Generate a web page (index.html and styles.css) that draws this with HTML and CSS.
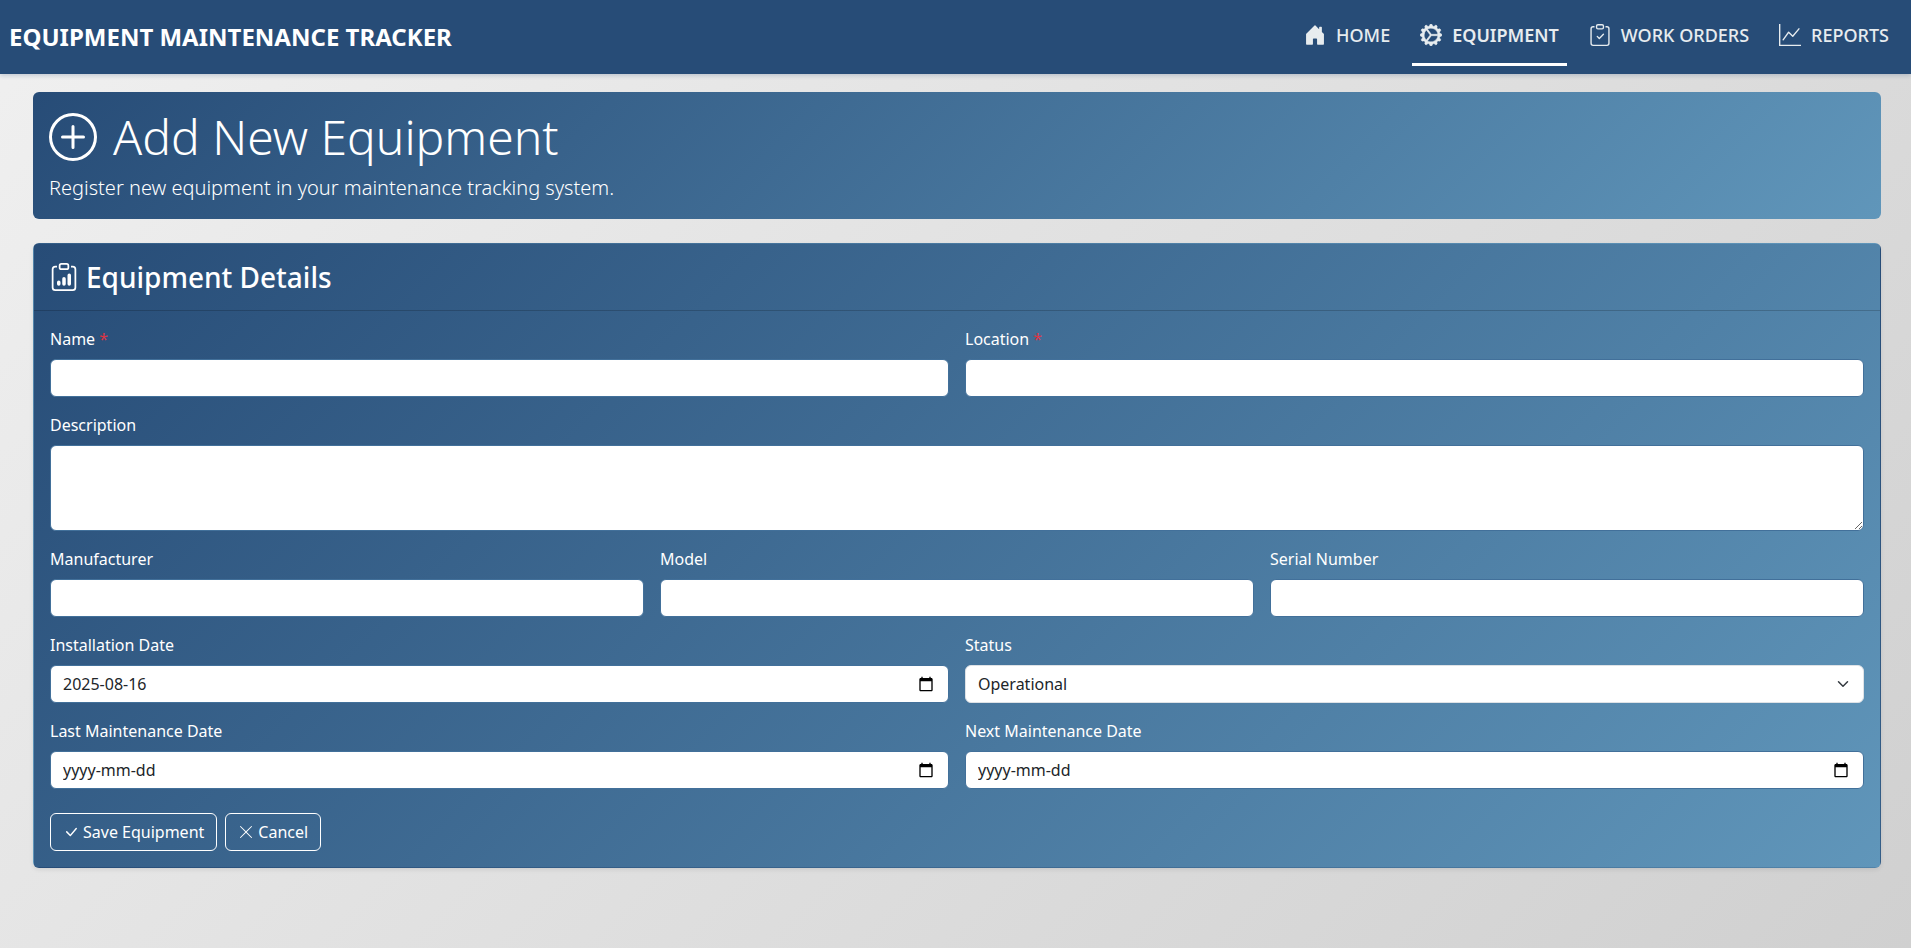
FILE: index.html
```html
<!DOCTYPE html>
<html lang="en-CA">
<head>
<meta charset="utf-8">
<meta name="viewport" content="width=device-width, initial-scale=1">
<title>Add New Equipment</title>
<link rel="stylesheet" href="styles.css">
</head>
<body>
<header class="navbar">
  <a class="brand" href="#">EQUIPMENT MAINTENANCE TRACKER</a>
  <nav class="nav" aria-label="Main">
    <a class="nav-link" href="#"><svg class="icon" viewBox="0 0 16 16" aria-hidden="true"><path d="M6.5 14.5v-3.505c0-.245.25-.495.5-.495h2c.25 0 .5.25.5.5v3.5a.5.5 0 0 0 .5.5h4a.5.5 0 0 0 .5-.5v-7a.5.5 0 0 0-.146-.354L13 5.793V2.5a.5.5 0 0 0-.5-.5h-1a.5.5 0 0 0-.5.5v1.293L8.354 1.146a.5.5 0 0 0-.708 0l-6 6A.5.5 0 0 0 1.5 7.5v7a.5.5 0 0 0 .5.5h4a.5.5 0 0 0 .5-.5"/></svg>HOME</a>
    <a class="nav-link active" href="#" aria-current="page"><svg class="icon" viewBox="0 0 16 16" aria-hidden="true"><path d="M7.068.727c.243-.97 1.62-.97 1.864 0l.071.286a.96.96 0 0 0 1.622.434l.205-.211c.695-.719 1.888-.03 1.613.931l-.08.284a.96.96 0 0 0 1.187 1.187l.283-.081c.96-.275 1.65.918.931 1.613l-.211.205a.96.96 0 0 0 .434 1.622l.286.071c.97.243.97 1.62 0 1.864l-.286.071a.96.96 0 0 0-.434 1.622l.211.205c.719.695.03 1.888-.931 1.613l-.284-.08a.96.96 0 0 0-1.187 1.187l.081.283c.275.96-.918 1.65-1.613.931l-.205-.211a.96.96 0 0 0-1.622.434l-.071.286c-.243.97-1.62.97-1.864 0l-.071-.286a.96.96 0 0 0-1.622-.434l-.205.211c-.695.719-1.888.03-1.613-.931l.08-.284a.96.96 0 0 0-1.186-1.187l-.284.081c-.96.275-1.65-.918-.931-1.613l.211-.205a.96.96 0 0 0-.434-1.622l-.286-.071c-.97-.243-.97-1.62 0-1.864l.286-.071a.96.96 0 0 0 .434-1.622l-.211-.205c-.719-.695-.03-1.888.931-1.613l.284.08a.96.96 0 0 0 1.187-1.186l-.081-.284c-.275-.96.918-1.65 1.613-.931l.205.211a.96.96 0 0 0 1.622-.434zM12.973 8.5H8.25l-2.834 3.779A4.998 4.998 0 0 0 12.973 8.5m0-1a4.998 4.998 0 0 0-7.557-3.779l2.834 3.78zM5.048 3.967l-.087.065zm-.431.355A4.98 4.98 0 0 0 3.002 8c0 1.455.622 2.765 1.615 3.678L7.375 8zm.344 7.646.087.065z"/></svg>EQUIPMENT</a>
    <a class="nav-link" href="#"><svg class="icon" viewBox="0 0 16 16" aria-hidden="true"><path d="M10.854 7.146a.5.5 0 0 1 0 .708l-3 3a.5.5 0 0 1-.708 0l-1.5-1.5a.5.5 0 1 1 .708-.708L7.5 9.793l2.646-2.647a.5.5 0 0 1 .708 0"/><path d="M4 1.5H3a2 2 0 0 0-2 2V14a2 2 0 0 0 2 2h10a2 2 0 0 0 2-2V3.5a2 2 0 0 0-2-2h-1v1h1a1 1 0 0 1 1 1V14a1 1 0 0 1-1 1H3a1 1 0 0 1-1-1V3.5a1 1 0 0 1 1-1h1z"/><path d="M9.5 1a.5.5 0 0 1 .5.5v1a.5.5 0 0 1-.5.5h-3a.5.5 0 0 1-.5-.5v-1a.5.5 0 0 1 .5-.5zm-3-1A1.5 1.5 0 0 0 5 1.5v1A1.5 1.5 0 0 0 6.5 4h3A1.5 1.5 0 0 0 11 2.5v-1A1.5 1.5 0 0 0 9.5 0z"/></svg>WORK ORDERS</a>
    <a class="nav-link" href="#"><svg class="icon" viewBox="0 0 16 16" aria-hidden="true"><path d="M0 0h1v15h15v1H0zm14.817 3.113a.5.5 0 0 1 .07.704l-4.5 5.5a.5.5 0 0 1-.74.037L7.06 6.767l-3.656 5.027a.5.5 0 0 1-.808-.588l4-5.5a.5.5 0 0 1 .758-.06l2.609 2.61 4.15-5.073a.5.5 0 0 1 .704-.07"/></svg>REPORTS</a>
  </nav>
</header>

<main class="content">
  <section class="page-header">
    <h1 class="page-title"><svg class="icon" viewBox="0 0 16 16" aria-hidden="true"><path d="M8 15A7 7 0 1 1 8 1a7 7 0 0 1 0 14m0 1A8 8 0 1 0 8 0a8 8 0 0 0 0 16"/><path d="M8 4a.5.5 0 0 1 .5.5v3h3a.5.5 0 0 1 0 1h-3v3a.5.5 0 0 1-1 0v-3h-3a.5.5 0 0 1 0-1h3v-3A.5.5 0 0 1 8 4"/></svg>Add New Equipment</h1>
    <p class="lead">Register new equipment in your maintenance tracking system.</p>
  </section>

  <section class="card">
    <div class="card-header">
      <h2 class="card-title"><svg class="icon" viewBox="0 0 16 16" aria-hidden="true"><path d="M4 11a1 1 0 1 1 2 0v1a1 1 0 1 1-2 0zm6-4a1 1 0 1 1 2 0v5a1 1 0 1 1-2 0zM7 9a1 1 0 0 1 2 0v3a1 1 0 1 1-2 0z"/><path d="M4 1.5H3a2 2 0 0 0-2 2V14a2 2 0 0 0 2 2h10a2 2 0 0 0 2-2V3.5a2 2 0 0 0-2-2h-1v1h1a1 1 0 0 1 1 1V14a1 1 0 0 1-1 1H3a1 1 0 0 1-1-1V3.5a1 1 0 0 1 1-1h1z"/><path d="M9.5 1a.5.5 0 0 1 .5.5v1a.5.5 0 0 1-.5.5h-3a.5.5 0 0 1-.5-.5v-1a.5.5 0 0 1 .5-.5zm-3-1A1.5 1.5 0 0 0 5 1.5v1A1.5 1.5 0 0 0 6.5 4h3A1.5 1.5 0 0 0 11 2.5v-1A1.5 1.5 0 0 0 9.5 0z"/></svg>Equipment Details</h2>
    </div>
    <form class="card-body">
      <div class="form-grid">
        <div class="field half">
          <label for="name">Name <span class="required">*</span></label>
          <input class="control" id="name" type="text">
        </div>
        <div class="field half">
          <label for="location">Location <span class="required">*</span></label>
          <input class="control" id="location" type="text">
        </div>
        <div class="field full">
          <label for="description">Description</label>
          <textarea class="control" id="description" rows="3"></textarea>
        </div>
        <div class="field third">
          <label for="manufacturer">Manufacturer</label>
          <input class="control" id="manufacturer" type="text">
        </div>
        <div class="field third">
          <label for="model">Model</label>
          <input class="control" id="model" type="text">
        </div>
        <div class="field third">
          <label for="serial">Serial Number</label>
          <input class="control" id="serial" type="text">
        </div>
        <div class="field half">
          <label for="installed">Installation Date</label>
          <div class="control-wrap">
            <input class="control" id="installed" type="text" inputmode="numeric" placeholder="yyyy-mm-dd" value="2025-08-16">
            <button class="picker" type="button" aria-label="Choose installation date"><svg class="icon" viewBox="0 0 24 24" aria-hidden="true"><path d="M20 3h-1V1h-2v2H7V1H5v2H4c-1.100 0-2 .9-2 2v16c0 1.100.9 2 2 2h16c1.100 0 2-.9 2-2V5c0-1.100-.9-2-2-2zm0 18H4V8h16v13z"/></svg></button>
          </div>
        </div>
        <div class="field half">
          <label for="status">Status</label>
          <div class="control-wrap">
            <select class="control select" id="status"><option>Operational</option></select>
            <svg class="chevron" viewBox="0 0 16 16" aria-hidden="true"><path d="m2 5 6 6 6-6"/></svg>
          </div>
        </div>
        <div class="field half">
          <label for="last">Last Maintenance Date</label>
          <div class="control-wrap">
            <input class="control" id="last" type="text" inputmode="numeric" placeholder="yyyy-mm-dd">
            <button class="picker" type="button" aria-label="Choose last maintenance date"><svg class="icon" viewBox="0 0 24 24" aria-hidden="true"><path d="M20 3h-1V1h-2v2H7V1H5v2H4c-1.100 0-2 .9-2 2v16c0 1.100.9 2 2 2h16c1.100 0 2-.9 2-2V5c0-1.100-.9-2-2-2zm0 18H4V8h16v13z"/></svg></button>
          </div>
        </div>
        <div class="field half">
          <label for="next">Next Maintenance Date</label>
          <div class="control-wrap">
            <input class="control" id="next" type="text" inputmode="numeric" placeholder="yyyy-mm-dd">
            <button class="picker" type="button" aria-label="Choose next maintenance date"><svg class="icon" viewBox="0 0 24 24" aria-hidden="true"><path d="M20 3h-1V1h-2v2H7V1H5v2H4c-1.100 0-2 .9-2 2v16c0 1.100.9 2 2 2h16c1.100 0 2-.9 2-2V5c0-1.100-.9-2-2-2zm0 18H4V8h16v13z"/></svg></button>
          </div>
        </div>
      </div>
      <div class="actions">
        <button class="btn" type="submit"><svg class="icon" viewBox="0 0 16 16" aria-hidden="true"><path d="M12.736 3.97a.733.733 0 0 1 1.047 0c.286.289.29.756.01 1.05L7.88 12.01a.733.733 0 0 1-1.065.02L3.217 8.384a.757.757 0 0 1 0-1.06.733.733 0 0 1 1.047 0l3.052 3.093 5.4-6.425z"/></svg>Save Equipment</button>
        <button class="btn" type="button"><svg class="icon" viewBox="0 0 16 16" aria-hidden="true"><path d="M2.146 2.854a.5.5 0 1 1 .708-.708L8 7.293l5.146-5.147a.5.5 0 0 1 .708.708L8.707 8l5.147 5.146a.5.5 0 0 1-.708.708L8 8.707l-5.146 5.147a.5.5 0 0 1-.708-.708L7.293 8z"/></svg>Cancel</button>
      </div>
    </form>
  </section>
</main>
</body>
</html>
```

FILE: styles.css
```css
* { box-sizing: border-box; }

body {
  margin: 0;
  min-height: 100vh;
  font-family: "Noto Sans", "Liberation Sans", sans-serif;
  font-size: 16px;
  line-height: 24px;
  color: #fff;
  background: linear-gradient(135deg, #f0f0f0, #d0d0d0);
}

.icon {
  width: 1em;
  height: 1em;
  flex: none;
  fill: currentColor;
}

.navbar {
  display: flex;
  align-items: center;
  justify-content: space-between;
  padding: 8px 14px 8px 9px;
  background: #274c77;
  box-shadow: 0 2px 4px rgba(39, 76, 119, 0.2);
}

.brand {
  color: #fff;
  font-size: 24px;
  font-weight: 700;
  line-height: 36px;
  text-decoration: none;
}

.nav {
  display: flex;
  gap: 14px;
}

.nav-link {
  display: flex;
  align-items: center;
  gap: 10px;
  padding: 14px 8px 15px;
  border-bottom: 3px solid transparent;
  color: #e7ecef;
  font-size: 18px;
  font-weight: 500;
  line-height: 26px;
  text-decoration: none;
}

.nav-link.active {
  border-bottom-color: #fff;
  font-weight: 600;
}

.nav-link .icon {
  width: 22px;
  height: 22px;
}

.nav-link.active .icon {
  stroke: currentColor;
  stroke-width: 0.4;
}

.content { padding: 18px 30px 24px 33px; }

.page-header {
  margin-bottom: 24px;
  padding: 16px;
  border-radius: 6px;
  background: linear-gradient(135deg, #274c77, #6096ba);
}

.page-title {
  display: flex;
  align-items: center;
  gap: 16px;
  margin: 0 0 7px;
  font-size: 48px;
  font-weight: 300;
  line-height: 58px;
}

.lead {
  margin: 0;
  font-size: 20px;
  font-weight: 300;
  line-height: 30px;
}

.card {
  border: 1px solid transparent;
  border-radius: 6px;
  background: linear-gradient(135deg, #274c77, #6096ba);
  box-shadow: 0 2px 4px rgba(0, 0, 0, 0.08);
}

.card-header {
  padding: 16px;
  border-bottom: 1px solid rgba(0, 0, 0, 0.18);
}

.card-title {
  display: flex;
  align-items: center;
  gap: 8px;
  margin: 0;
  font-size: 28px;
  font-weight: 500;
  line-height: 34px;
}

.card-body { padding: 16px; }

.form-grid {
  display: grid;
  grid-template-columns: repeat(6, minmax(0, 1fr));
  gap: 16px;
}

.half { grid-column: span 3; }
.third { grid-column: span 2; }
.full { grid-column: span 6; }

.field {
  display: flex;
  flex-direction: column;
  gap: 8px;
}

.required { color: #dc3545; }

.control {
  display: block;
  width: 100%;
  height: 38px;
  margin: 0;
  padding: 6px 12px;
  border: 1px solid #42709a;
  border-radius: 6px;
  background: #fff;
  color: #212529;
  font: inherit;
}

.control::placeholder {
  color: #212529;
  opacity: 1;
}

textarea.control {
  height: auto;
  resize: vertical;
}

.control-wrap { position: relative; }

.select {
  border-color: #dee2e6;
  appearance: none;
}

.chevron {
  position: absolute;
  top: 13px;
  right: 13px;
  width: 16px;
  height: 12px;
  fill: none;
  stroke: #343a40;
  stroke-width: 2;
  stroke-linecap: round;
  stroke-linejoin: round;
  pointer-events: none;
}

.picker {
  position: absolute;
  top: 11px;
  right: 15px;
  display: flex;
  padding: 0;
  border: 0;
  background: none;
  color: #000;
  font-size: 16px;
  cursor: pointer;
}

.actions {
  display: flex;
  gap: 8px;
  margin-top: 24px;
}

.btn {
  display: flex;
  align-items: center;
  gap: 4px;
  padding: 6px 12px;
  border: 1px solid #fff;
  border-radius: 6px;
  background: transparent;
  color: #fff;
  font: inherit;
  cursor: pointer;
}
```
